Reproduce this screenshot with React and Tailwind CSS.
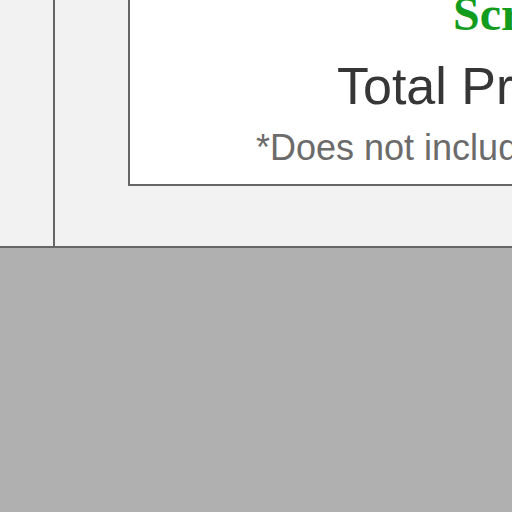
import React from 'react';

// Cropped view of a summary card sitting on a light panel, over a grey footer
export default function App() {
  return (
    <div className="w-[512px] h-[512px] overflow-hidden flex flex-col bg-[#b0b0b0]">
      {/* Top panel */}
      <div className="h-[248px] shrink-0 flex bg-[#f2f2f2] border-b-2 border-[#666666]">
        <div className="w-[53px] shrink-0" />
        <div className="flex-1 flex border-l-2 border-[#666666] pl-[73px]">
          {/* Summary card */}
          <div className="w-[600px] shrink-0 h-[186px] bg-white border-l-2 border-b-2 border-[#666666] flex flex-col whitespace-nowrap">
            <div
              className="mt-[-10px] ml-[323px] h-[47px] text-[48px] leading-[47px] font-bold text-[#129c1e]"
              style={{ fontFamily: '"Liberation Serif", serif' }}
            >
              Screening Summary
            </div>
            <div
              className="mt-[23px] ml-[207px] h-[52px] text-[52px] leading-[52px] text-[#363636]"
              style={{ fontFamily: '"Liberation Sans", Arial, sans-serif' }}
            >
              Total Price
            </div>
            <div
              className="mt-[18px] ml-[126px] h-[36px] text-[36px] leading-[36px] text-[#6b6b6b]"
              style={{ fontFamily: '"Liberation Sans", Arial, sans-serif' }}
            >
              *Does not include tax
            </div>
          </div>
        </div>
      </div>
      {/* Footer */}
      <div className="flex-1" />
    </div>
  );
}
